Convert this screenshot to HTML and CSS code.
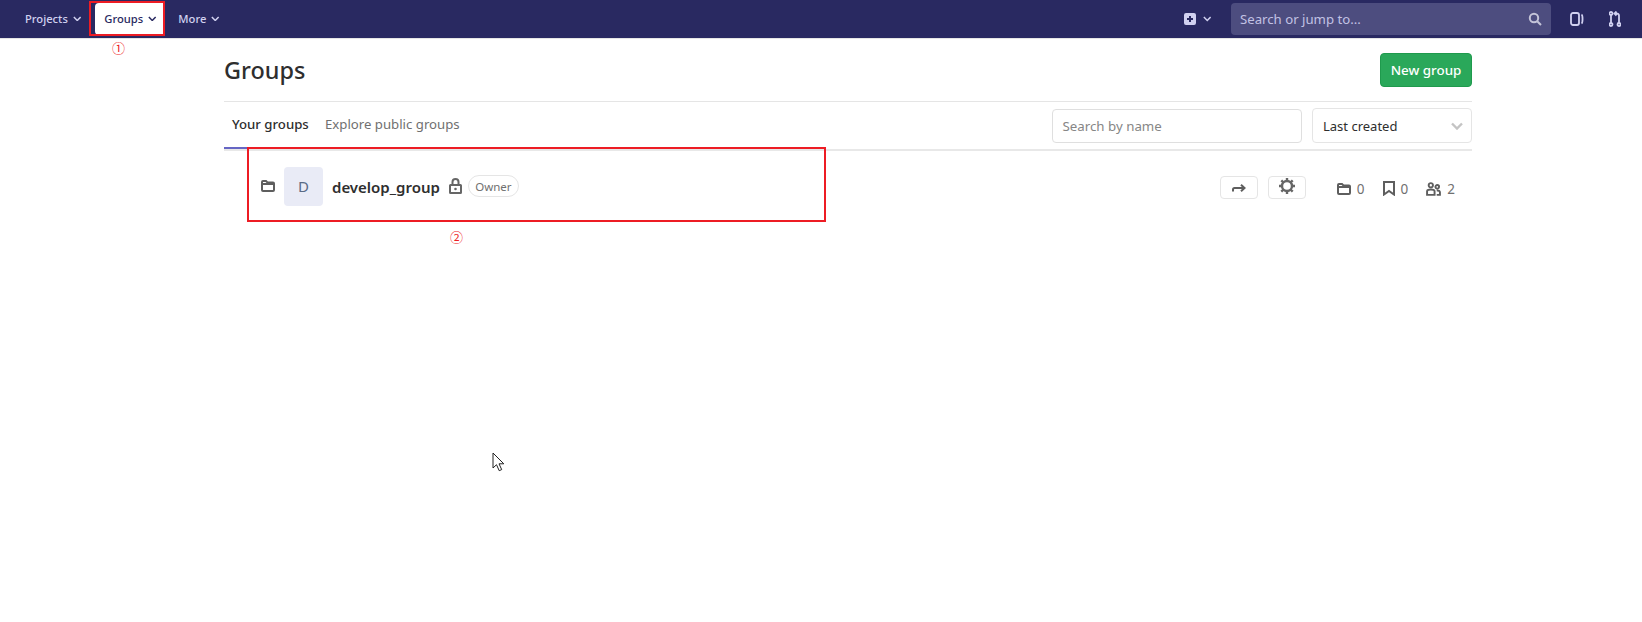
FILE: index.html
```html
<!DOCTYPE html>
<html lang="en">
<head>
<meta charset="utf-8">
<title>Groups</title>
<link rel="stylesheet" href="styles.css">
</head>
<body>
<header class="navbar">
  <nav class="nav-left">
    <a class="nav-item">Projects <svg class="chev" viewBox="0 0 10 6"><path d="M1 1l4 4 4-4"/></svg></a>
    <a class="nav-item active">Groups <svg class="chev" viewBox="0 0 10 6"><path d="M1 1l4 4 4-4"/></svg></a>
    <a class="nav-item">More <svg class="chev" viewBox="0 0 10 6"><path d="M1 1l4 4 4-4"/></svg></a>
  </nav>
  <div class="nav-right">
    <a class="plus">
      <svg class="plus-icon" viewBox="0 0 12 12"><path fill-rule="evenodd" d="M2 0h8a2 2 0 0 1 2 2v8a2 2 0 0 1-2 2H2a2 2 0 0 1-2-2V2a2 2 0 0 1 2-2zm3 3v2H3v2h2v2h2V7h2V5H7V3z"/></svg>
      <svg class="chev" viewBox="0 0 10 6"><path d="M1 1l4 4 4-4"/></svg>
    </a>
    <div class="nav-search">
      <span>Search or jump to...</span>
      <svg class="search-icon" viewBox="0 0 14 14"><circle cx="6" cy="6" r="4.2"/><path d="M9.2 9.2L13 13"/></svg>
    </div>
    <svg class="nav-icon issues" viewBox="0 0 14 16"><rect x="1" y="2" width="8" height="12" rx="2"/><path d="M11.500 3.500c1.400.8 1.400 8.200 0 9"/></svg>
    <svg class="nav-icon mr" viewBox="0 0 12 16"><circle cx="2" cy="2.500" r="1.500"/><circle cx="2" cy="13.500" r="1.500"/><circle cx="10" cy="13.500" r="1.500"/><path d="M2 4v8M10 12V4.500C10 3 9 2.500 7.500 2.500H6M7.500 .5l-2 2 2 2"/></svg>
  </div>
</header>

<main class="container">
  <div class="title-row">
    <h1>Groups</h1>
    <a class="btn-new">New group</a>
  </div>
  <div class="tabs-row">
    <div class="tabs">
      <a class="tab current">Your groups</a>
      <a class="tab">Explore public groups</a>
    </div>
    <div class="filters">
      <div class="filter-input">Search by name</div>
      <div class="filter-select">Last created
        <svg class="select-chev" viewBox="0 0 12 8"><path d="M1 1.500l5 5 5-5"/></svg>
      </div>
    </div>
  </div>
  <div class="group-row">
    <svg class="folder row-folder" viewBox="0 0 14 12"><path d="M1 2a1 1 0 0 1 1-1h3l1.500 1.500H12a1 1 0 0 1 1 1V10a1 1 0 0 1-1 1H2a1 1 0 0 1-1-1zM1.500 4h11"/></svg>
    <div class="avatar">D</div>
    <a class="group-name">develop_group</a>
    <svg class="lock" viewBox="0 0 13 16"><path fill-rule="evenodd" d="M2.500 6V4a4 4 0 0 1 8 0v2h1A1.500 1.500 0 0 1 13 7.500V14.500A1.500 1.500 0 0 1 11.500 16h-10A1.500 1.500 0 0 1 0 14.500V7.500A1.500 1.500 0 0 1 1.500 6zm2 0h4V4a2 2 0 0 0-4 0zM2 8v6h9V8zM6.500 9.700a1.300 1.300 0 1 1 0 2.600 1.300 1.300 0 0 1 0-2.600z"/></svg>
    <span class="badge">Owner</span>
    <div class="row-actions">
      <a class="icon-btn"><svg class="share" viewBox="0 0 14 8"><path d="M1 7.500V5.500C1 4.500 1.500 4 2.500 4H12M9 .8L12.500 4 9 7.200"/></svg></a>
      <a class="icon-btn"><svg class="gear" viewBox="0 0 16 16"><circle cx="8" cy="8" r="5"/><path d="M8 0v3M8 13v3M0 8h3M13 8h3M2.300 2.300l2.200 2.200M11.500 11.500l2.200 2.200M13.700 2.300l-2.200 2.200M4.500 11.500l-2.200 2.200"/></svg></a>
    </div>
    <div class="stats">
      <span class="stat"><svg class="folder" viewBox="0 0 14 12"><path d="M1 2a1 1 0 0 1 1-1h3l1.500 1.500H12a1 1 0 0 1 1 1V10a1 1 0 0 1-1 1H2a1 1 0 0 1-1-1zM1.500 4h11"/></svg><b>0</b></span>
      <span class="stat"><svg class="bookmark" viewBox="0 0 12 15"><path d="M1 1h10v12.500L6 10l-5 3.500z"/></svg><b>0</b></span>
      <span class="stat"><svg class="people" viewBox="0 0 14 13"><circle cx="4.500" cy="3" r="2"/><circle cx="10.500" cy="4.500" r="1.700"/><path d="M1 12V8.500C1 7.500 2.500 7 4.500 7S8 7.500 8 8.500V12zM10 8c2-.3 3 .4 3 1.500V12h-3"/></svg><b>2</b></span>
    </div>
  </div>
</main>

<div class="mark mark-nav"></div>
<div class="mark mark-row"></div>
<span class="note note-1">①</span>
<span class="note note-2">②</span>
<svg class="cursor" viewBox="0 0 13 20"><path d="M1 1v15l3.500-3.300 2.700 6 2.500-1.100-2.700-5.800h4.800z"/></svg>
</body>
</html>
```

FILE: styles.css
```css
* { box-sizing: border-box; }
html, body { margin: 0; height: 622px; overflow: hidden; background: #fff; }
body { font-family: "Noto Sans", "Open Sans", sans-serif; color: #2e2e2e; position: relative; font-size: 13px; }
svg { display: block; flex: none; }

.navbar { height: 39px; background: #292961; border-bottom: 1px solid #e5e5e5; display: flex; justify-content: space-between; align-items: center; }
.nav-left { display: flex; align-items: center; padding-left: 17px; height: 38px; }
.nav-item { display: flex; align-items: center; gap: 5px; height: 32px; padding: 0 8px 1px; margin-right: 6px; font-size: 11.200px; font-weight: 500; color: #d1d1f0; border-radius: 4px; white-space: nowrap; }
.nav-item.active { background: #fff; color: #292961; padding: 0 7px 1px 9px; margin: 0 7px 0 0; width: 68px; border-radius: 4px 0 0 4px; }
.chev { width: 8.500px; height: 5.500px; fill: none; stroke: currentColor; stroke-width: 1.800; }

.nav-right { display: flex; align-items: center; height: 38px; padding-right: 21px; }
.plus { display: flex; align-items: center; gap: 7px; color: #d1d1f0; margin-right: 20px; }
.plus-icon { width: 12px; height: 12px; fill: #d1d1f0; }
.nav-search { width: 320px; height: 32px; background: #4d4d7f; border-radius: 4px; display: flex; align-items: center; justify-content: space-between; padding: 0 9px; color: #c2c2e4; font-size: 13.200px; margin-right: 19px; }
.search-icon { width: 14px; height: 14px; fill: none; stroke: #c4c4d8; stroke-width: 2; }
.nav-icon { fill: none; stroke: #d1d1f0; stroke-width: 1.800; width: 14px; height: 16px; }
.issues { margin-right: 25px; }
.mr { width: 12px; }

.container { width: 1248px; margin-left: 224px; }
.title-row { display: flex; justify-content: space-between; align-items: center; height: 63px; border-bottom: 1px solid #e5e5e5; padding-top: 3px; }
h1 { margin: 0 0 3px; font-size: 23.400px; font-weight: 500; color: #2e2e2e; line-height: 32px; }
.btn-new { width: 92px; height: 34px; background: #2aa85a; border: 1px solid #1f9a4d; border-radius: 4px; color: #fff; font-size: 13.400px; display: flex; align-items: center; justify-content: center; font-weight: 500; margin-bottom: 4px; }

.tabs-row { display: flex; justify-content: space-between; height: 49px; border-bottom: 2px solid #e8e8e8; }
.tabs { display: flex; }
.tab { height: 47px; padding: 12px 8px 0; color: #707070; font-size: 13.200px; line-height: 20px; white-space: nowrap; }
.tab.current { width: 93px; color: #2e2e2e; font-weight: 500; border-bottom: 2px solid #6666c4; }
.filters { display: flex; align-items: flex-start; gap: 10px; padding-top: 6px; }
.filter-input { width: 250px; height: 34px; margin-top: 1px; border: 1px solid #dfdfdf; border-radius: 4px; padding: 0 9.500px; color: #868686; font-size: 13.300px; line-height: 32px; }
.filter-select { width: 160px; height: 35px; border: 1px solid #e5e5e5; border-radius: 4px; padding: 1px 8px 0 10px; color: #2e2e2e; font-size: 13px; line-height: 33px; display: flex; justify-content: space-between; align-items: center; }
.select-chev { width: 12px; height: 8px; fill: none; stroke: #c4c4c4; stroke-width: 2.400; }

.group-row { display: flex; align-items: center; height: 74px; padding: 0 17px 0 37px; }
.folder { width: 14px; height: 12px; fill: none; stroke: #5e5e5e; stroke-width: 2; }
.row-folder { margin-right: 9px; margin-top: -5px; }
.avatar { width: 39px; height: 39px; background: #e9ebf6; border-radius: 4px; color: #5a6a85; font-size: 15px; display: flex; align-items: center; justify-content: center; margin-right: 9px; margin-top: -4px; }
.group-name { font-size: 15px; font-weight: 600; color: #2e2e2e; margin-right: 9px; margin-top: -3px; }
.lock { width: 13px; height: 16px; fill: #666; margin-right: 6px; margin-top: -5px; }
.badge { height: 22px; width: 51px; border: 1px solid #e5e5e5; border-radius: 11px; color: #707070; font-size: 11.500px; display: flex; align-items: center; justify-content: center; margin-top: -4px; }
.row-actions { display: flex; gap: 10px; margin-left: auto; margin-top: -1px; }
.icon-btn { width: 38px; height: 23px; border: 1px solid #e5e5e5; border-radius: 4px; display: flex; align-items: center; justify-content: center; }
.share { width: 14px; height: 8px; fill: none; stroke: #5e5e5e; stroke-width: 2; }
.gear { width: 16px; height: 16px; fill: none; stroke: #666; stroke-width: 2.400; margin-top: -3px; overflow: visible; }
.stats { display: flex; gap: 18px; margin-left: 31px; margin-top: 1px; color: #707070; font-size: 13.500px; }
.stat { display: flex; align-items: center; gap: 6px; }
.stat b { font-weight: 400; }
.bookmark { width: 12px; height: 15px; fill: none; stroke: #5e5e5e; stroke-width: 2; }
.people { width: 15px; height: 14px; fill: none; stroke: #5e5e5e; stroke-width: 1.800; }

.mark { position: absolute; border: 2px solid #ed1c24; pointer-events: none; }
.mark-nav { left: 89px; top: 1px; width: 76px; height: 35px; }
.mark-row { left: 247px; top: 147px; width: 579px; height: 75px; }
.note { position: absolute; color: #ed1c24; font-size: 13px; line-height: 14px; font-family: "Noto Sans CJK SC", sans-serif; }
.note-1 { left: 112px; top: 41px; }
.note-2 { left: 450px; top: 230px; }
.cursor { position: absolute; left: 492px; top: 452px; width: 13px; height: 20px; fill: #fff; stroke: #222; stroke-width: 1; }
```
